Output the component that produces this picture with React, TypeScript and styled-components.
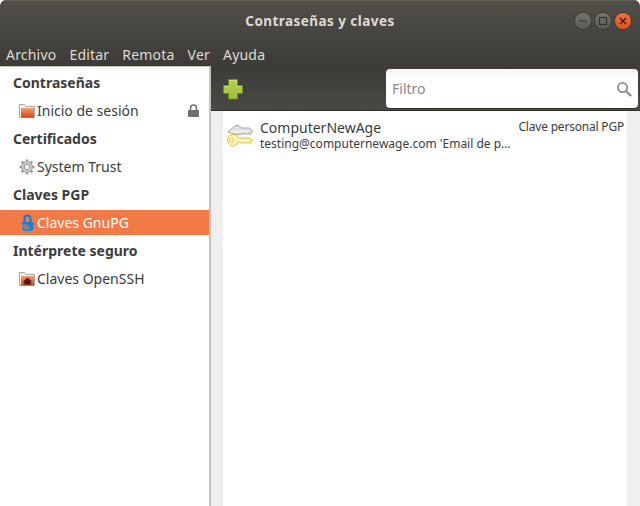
import React from 'react';
import styled, { createGlobalStyle } from 'styled-components';

const Global = createGlobalStyle`
  html, body { margin: 0; padding: 0; background: #fff; }
  body { font-family: "Noto Sans", "Open Sans", sans-serif; }
`;

const Window = styled.div`
  width: 640px;
  height: 506px;
  display: flex;
  flex-direction: column;
  overflow: hidden;
  border-radius: 6px 6px 0 0;
`;

const Header = styled.div`
  flex: none;
  background: linear-gradient(#524f49, #3c3b37);
  box-shadow: inset 0 1px 0 #5f5d56;
`;

const TitleBar = styled.div`
  height: 37px;
  display: flex;
  align-items: center;
  justify-content: center;
  position: relative;
`;

const Title = styled.div`
  font-size: 13.5px;
  font-weight: 700;
  color: #dfdbd2;
  letter-spacing: 0.45px;
  margin-top: 5px;
`;

const Controls = styled.div`
  position: absolute;
  right: 9px;
  top: 13px;
  display: flex;
  gap: 4px;
`;

const Control = styled.div<{ $close?: boolean }>`
  width: 16px;
  height: 16px;
  border-radius: 50%;
  display: flex;
  align-items: center;
  justify-content: center;
  background: ${p => (p.$close ? 'linear-gradient(#ee7040, #e2541f)' : 'linear-gradient(#76746d, #5b5953)')};
  box-shadow: 0 0 0 1px #3a3934;
`;

const MenuBar = styled.div`
  height: 29px;
  box-sizing: border-box;
  padding: 5px 0 0 6px;
  display: flex;
  align-items: center;
  gap: 13px;
`;

const MenuItem = styled.span`
  font-size: 14px;
  letter-spacing: 0.2px;
  color: #dfdbd2;
`;

const Body = styled.div`
  flex: 1;
  min-height: 0;
  display: flex;
`;

const Sidebar = styled.div`
  width: 209px;
  flex: none;
  background: #fff;
  border-right: 2px solid #c4c3c0;
  border-top: 1px solid #c4c3c0;
`;

const Heading = styled.div`
  height: 31px;
  line-height: 31px;
  padding-left: 13px;
  font-size: 14px;
  font-weight: 700;
  color: #3c3c3c;
`;

const Row = styled.div<{ $selected?: boolean }>`
  height: 25px;
  display: flex;
  align-items: center;
  padding: 0 9px 0 19px;
  gap: 2px;
  font-size: 14px;
  color: ${p => (p.$selected ? '#fff' : '#3c3c3c')};
  background: ${p => (p.$selected ? '#f17a46' : 'transparent')};
`;

const RowLabel = styled.span`
  flex: 1;
  white-space: nowrap;
`;

const Main = styled.div`
  flex: 1;
  min-width: 0;
  display: flex;
  flex-direction: column;
`;

const Toolbar = styled.div`
  height: 45px;
  flex: none;
  display: flex;
  align-items: flex-start;
  justify-content: space-between;
  padding: 3px 2px 0 12px;
  box-sizing: border-box;
  background: linear-gradient(#3c3b37, #4b4943);
  border-bottom: 1px solid #2f2e2b;
`;

const AddButton = styled.div`
  margin-top: 10px;
  width: 20px;
  height: 22px;
`;

const Search = styled.div`
  width: 252px;
  height: 39px;
  box-sizing: border-box;
  border-radius: 4px;
  background: linear-gradient(#f6f6f5, #fff 30%);
  display: flex;
  align-items: center;
  justify-content: space-between;
  padding: 0 6px;
  box-shadow: 0 1px 0 #2c2b28;
`;

const SearchText = styled.span`
  font-size: 14px;
  color: #8a8a88;
`;

const Content = styled.div`
  flex: 1;
  min-height: 0;
  display: flex;
  background: #f0efed;
  padding: 0 13px 0 12px;
`;

const List = styled.div`
  flex: 1;
  min-width: 0;
  background: #fff;
`;

const KeyRow = styled.div`
  display: flex;
  align-items: flex-start;
  padding: 8px 3px 0 4px;
  gap: 7px;
  color: #3c3c3c;
`;

const KeyIcon = styled.div`
  flex: none;
  width: 26px;
  height: 23px;
  margin-top: 6px;
`;

const KeyText = styled.div`
  flex: 1;
  min-width: 0;
`;

const KeyName = styled.div`
  font-size: 14px;
  line-height: 17px;
`;

const KeyDetail = styled.div`
  font-size: 12px;
  line-height: 15px;
  width: 253px;
  white-space: nowrap;
  overflow: hidden;
  text-overflow: ellipsis;
`;

const KeyType = styled.div`
  font-size: 12px;
  letter-spacing: -0.2px;
  line-height: 15px;
  white-space: nowrap;
`;

const FolderIcon: React.FC<{ house?: boolean }> = ({ house }) => (
  <svg width="16" height="16" viewBox="0 0 16 16">
    <path d="M0.5 14.5V1.500h5l1.500 2h8.500v11z" fill="#f1f1ef" stroke="#a9a9a6" />
    <defs>
      <linearGradient id="fold" x1="0" y1="0" x2="0" y2="1">
        <stop offset="0" stopColor="#f4a070" />
        <stop offset="1" stopColor="#d2401a" />
      </linearGradient>
    </defs>
    <rect x="2" y="5" width="13" height="9.500" fill="url(#fold)" />
    {house && <path d="M8.500 6.500L13 10.500h-1.200v3H5.200v-3H4z" fill="#5a1608" />}
  </svg>
);

const GearIcon = () => (
  <svg width="16" height="16" viewBox="0 0 16 16">
    <g stroke="#9c9c99" strokeWidth="2.400">
      <path d="M8 0.500v3M8 12.500v3M0.500 8h3M12.500 8h3M2.700 2.700l2.100 2.100M11.200 11.200l2.100 2.100M13.300 2.700l-2.100 2.100M4.800 11.200l-2.100 2.100" />
    </g>
    <circle cx="8" cy="8" r="5.400" fill="#cfcfcd" stroke="#9c9c99" />
    <circle cx="8" cy="8" r="2.800" fill="#f2f2f1" stroke="#999" />
  </svg>
);

const GnuPGIcon = () => (
  <svg width="16" height="18" viewBox="0 0 16 18">
    <path d="M5.500 8V4.500a3 3 0 0 1 6 0V8" fill="none" stroke="#1a7fd4" strokeWidth="2.200" />
    <path d="M3 8h11.500v5.500c0 2-1.500 3.500-3.500 3.500H6c-1.500 0-3-1.500-3-3.500z" fill="#1a7fd4" />
    <path d="M2 11h6.500M3 13h7M5 15h6" stroke="#f17a46" strokeWidth="1" />
  </svg>
);

const LockIcon = () => (
  <svg width="13" height="13" viewBox="0 0 13 13">
    <path d="M3.500 6V4a3 3 0 0 1 6 0v2" fill="none" stroke="#6f6f6f" strokeWidth="1.600" />
    <rect x="1" y="6" width="11" height="7" rx="1" fill="#6f6f6f" />
  </svg>
);

const PlusIcon = () => (
  <svg width="20" height="22" viewBox="0 0 20 22">
    <defs>
      <linearGradient id="plus" x1="0" y1="0" x2="0" y2="1">
        <stop offset="0" stopColor="#b4d050" />
        <stop offset="1" stopColor="#a0c040" />
      </linearGradient>
    </defs>
    <path d="M5.500 2h9v6H20v6h-5.500v7h-9v-7H0V8h5.500z" fill="#22211e" opacity="0.25" />
    <path d="M5.500 0.500h9v6h5v8h-5v5.500h-9v-5.500h-5v-8h5z" fill="url(#plus)" stroke="#6f9020" />
    <path d="M6.500 1.500h7v6h5M1.500 7.500h5" fill="none" stroke="#d0e47c" strokeWidth="0.800" />
  </svg>
);

const SearchIcon = () => (
  <svg width="16" height="16" viewBox="0 0 16 16">
    <circle cx="6.500" cy="6.500" r="4.600" fill="none" stroke="#8f8f8d" strokeWidth="1.800" />
    <path d="M10 10l5 5" stroke="#8f8f8d" strokeWidth="2.400" />
  </svg>
);

const KeysIcon = () => (
  <svg width="26" height="23" viewBox="0 0 26 23">
    <path d="M1 7L8.500 0.500h3l3 2.500h8l3 3.500-2 3-1.500-1.500-1.500 1.500-1.500-1.500-1.500 1.500-1.500-1.500-1.500 1.500H9z" fill="#dededb" stroke="#a8a8a4" />
    <path d="M3 6.500h19" stroke="#f6f6f5" strokeWidth="1.500" />
    <path d="M0.500 15.500C0.500 12 3 9.500 6 9.500c2.500 0 4.500 1.300 5.500 3.500h11.500l2.500 2.500-2.500 3-1.500-1.500-1.500 1.500-1.500-1.500-1.500 1.500-1.500-1.500-1.500 1.500-1.500-1.500h-1.500c-1 2.500-3 4-5.500 4-3 0-5-2.500-5-6z" fill="#fbf3b0" stroke="#d8c23c" />
    <path d="M12 15.500h11" stroke="#fffbe0" strokeWidth="1.200" />
    <circle cx="4.500" cy="15.500" r="1.800" fill="#fff" stroke="#d8c23c" />
  </svg>
);

const App: React.FC = () => (
  <Window>
    <Global />
    <Header>
      <TitleBar>
        <Title>Contraseñas y claves</Title>
        <Controls>
          <Control>
            <svg width="10" height="10" viewBox="0 0 10 10"><path d="M1 5h8" stroke="#33322e" strokeWidth="1.200" /></svg>
          </Control>
          <Control>
            <svg width="10" height="10" viewBox="0 0 10 10"><rect x="1.500" y="1.500" width="7" height="7" fill="none" stroke="#33322e" strokeWidth="1.200" /></svg>
          </Control>
          <Control $close>
            <svg width="10" height="10" viewBox="0 0 10 10"><path d="M2 2l6 6M8 2l-6 6" stroke="#4a1d0c" strokeWidth="1.400" /></svg>
          </Control>
        </Controls>
      </TitleBar>
      <MenuBar>
        {['Archivo', 'Editar', 'Remota', 'Ver', 'Ayuda'].map(m => (
          <MenuItem key={m}>{m}</MenuItem>
        ))}
      </MenuBar>
    </Header>
    <Body>
      <Sidebar>
        <Heading>Contraseñas</Heading>
        <Row>
          <FolderIcon />
          <RowLabel>Inicio de sesión</RowLabel>
          <LockIcon />
        </Row>
        <Heading>Certificados</Heading>
        <Row>
          <GearIcon />
          <RowLabel>System Trust</RowLabel>
        </Row>
        <Heading>Claves PGP</Heading>
        <Row $selected>
          <GnuPGIcon />
          <RowLabel>Claves GnuPG</RowLabel>
        </Row>
        <Heading>Intérprete seguro</Heading>
        <Row>
          <FolderIcon house />
          <RowLabel>Claves OpenSSH</RowLabel>
        </Row>
      </Sidebar>
      <Main>
        <Toolbar>
          <AddButton><PlusIcon /></AddButton>
          <Search>
            <SearchText>Filtro</SearchText>
            <SearchIcon />
          </Search>
        </Toolbar>
        <Content>
          <List>
            <KeyRow>
              <KeyIcon><KeysIcon /></KeyIcon>
              <KeyText>
                <KeyName>ComputerNewAge</KeyName>
                <KeyDetail>testing@computernewage.com 'Email de prueba'</KeyDetail>
              </KeyText>
              <KeyType>Clave personal PGP</KeyType>
            </KeyRow>
          </List>
        </Content>
      </Main>
    </Body>
  </Window>
);

export default App;
